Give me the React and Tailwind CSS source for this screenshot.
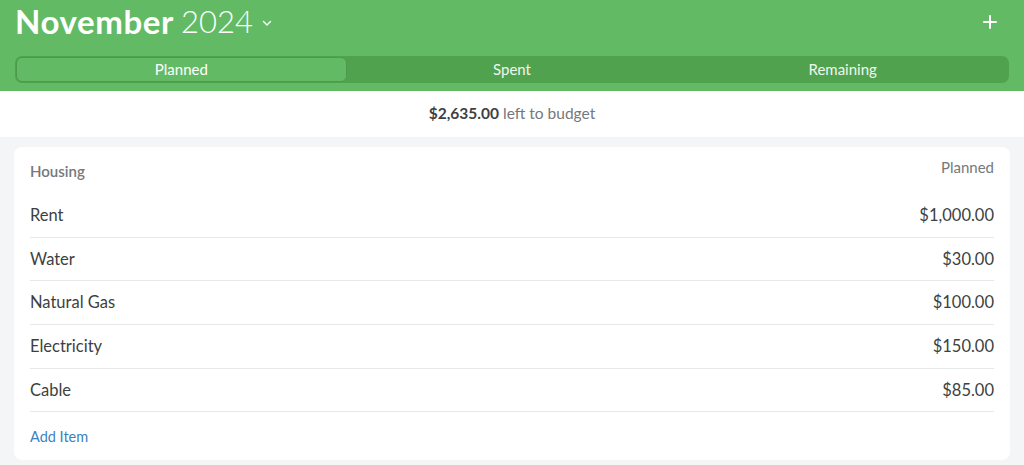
import { useState } from 'react';

const items = [
  { name: 'Rent', amount: '$1,000.00' },
  { name: 'Water', amount: '$30.00' },
  { name: 'Natural Gas', amount: '$100.00' },
  { name: 'Electricity', amount: '$150.00' },
  { name: 'Cable', amount: '$85.00' },
];

const tabs = ['Planned', 'Spent', 'Remaining'];

export default function App() {
  const [tab, setTab] = useState('Planned');

  return (
    <div className="min-h-[465px] bg-[#f3f5f7] font-['Lato','Liberation_Sans',sans-serif]">
      {/* Header */}
      <div className="bg-[#62bb64] px-[15px] pt-[2px] pb-[8px]">
        <div className="flex items-center justify-between h-[39px]">
          <div className="flex items-center text-white">
            <span className="text-[33px] font-bold tracking-[0.6px] leading-none">November</span>
            <span className="ml-[7px] text-[31px] font-light leading-none">2024</span>
            <svg className="ml-[8px] mt-[3px] w-[12px] h-[12px]" viewBox="0 0 12 12" fill="none" stroke="white" strokeWidth="1.4" strokeLinecap="round" strokeLinejoin="round">
              <path d="M2.5 4.5 6 8l3.5-3.5" />
            </svg>
          </div>
          <svg className="mr-[11px] w-[16px] h-[16px]" viewBox="0 0 16 16" fill="none" stroke="white" strokeWidth="2" strokeLinecap="round">
            <path d="M8 2v12M2 8h12" />
          </svg>
        </div>
        <div className="mt-[15px] grid grid-cols-3 bg-[#50a24f] rounded-[7px] h-[27px] p-[1px]">
          {tabs.map((t) => (
            <button
              key={t}
              onClick={() => setTab(t)}
              className={
                tab === t
                  ? 'rounded-[6px] bg-[#62bb64] border border-[#4c9a4b] text-white text-[15px] leading-none'
                  : 'rounded-[6px] text-[#eef8ee] text-[15px] leading-none'
              }
            >
              {t}
            </button>
          ))}
        </div>
      </div>

      {/* Left to budget */}
      <div className="bg-white h-[46px] flex items-center justify-center text-[15.5px]">
        <span className="font-bold text-[#3d3f42]">$2,635.00</span>
        <span className="ml-[4px] text-[#75787c]">left to budget</span>
      </div>

      {/* Card */}
      <div className="px-[14px] pt-[10px] pb-[5px]">
        <div className="bg-white rounded-[8px] px-[16px]">
          <div className="flex justify-between pt-[10px] h-[47px]">
            <span className="mt-[3px] text-[15px] font-semibold text-[#75787c]">Housing</span>
            <span className="-mt-[1px] text-[15px] text-[#75787c]">Planned</span>
          </div>
          {items.map((item) => (
            <div key={item.name} className="flex items-center justify-between h-[43.7px] border-b border-[#e6e8ea] text-[16.5px] text-[#3d3f42]">
              <span>{item.name}</span>
              <span>{item.amount}</span>
            </div>
          ))}
          <div className="flex items-center h-[48px] text-[14.5px] text-[#3d7fc1]">Add Item</div>
        </div>
      </div>
    </div>
  );
}
